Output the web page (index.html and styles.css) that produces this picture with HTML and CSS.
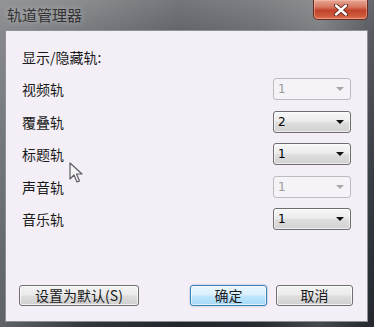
FILE: index.html
```html
<!DOCTYPE html>
<html lang="zh-CN">
<head>
<meta charset="utf-8">
<link rel="stylesheet" href="styles.css">
</head>
<body>
<div class="window">
  <div class="titlebar">
    <span class="title">轨道管理器</span>
    <div class="close">
      <svg width="16" height="12" viewBox="0 0 16 12">
        <path d="M3 1.5 L13 10.5 M13 1.5 L3 10.5" stroke="#5a2418" stroke-width="4.2" stroke-linecap="round" fill="none"/>
        <path d="M3 1.5 L13 10.5 M13 1.5 L3 10.5" stroke="#ffffff" stroke-width="2.4" stroke-linecap="round" fill="none"/>
      </svg>
    </div>
  </div>
  <div class="client">
    <div class="heading">显示/隐藏轨:</div>
    <div class="tracks">
      <div class="row"><span class="label">视频轨</span>
        <div class="combo disabled"><span class="val">1</span><span class="arrow"></span></div></div>
      <div class="row"><span class="label">覆叠轨</span>
        <div class="combo"><span class="val">2</span><span class="arrow"></span></div></div>
      <div class="row"><span class="label">标题轨</span>
        <div class="combo"><span class="val">1</span><span class="arrow"></span></div></div>
      <div class="row"><span class="label">声音轨</span>
        <div class="combo disabled"><span class="val">1</span><span class="arrow"></span></div></div>
      <div class="row"><span class="label">音乐轨</span>
        <div class="combo"><span class="val">1</span><span class="arrow"></span></div></div>
    </div>
    <div class="buttons">
      <button class="btn wide">设置为默认(S)</button>
      <div class="right">
        <button class="btn primary">确定</button>
        <button class="btn">取消</button>
      </div>
    </div>
  </div>
  <svg class="cursor" width="14" height="22" viewBox="0 0 14 22">
    <path d="M1 1 L1 17 L5 13 L8 20 L10.5 19 L7.5 12 L13 12 Z" fill="#f4f4f4" stroke="#5d5f63" stroke-width="1.2" stroke-linejoin="round"/>
  </svg>
</div>
</body>
</html>
```

FILE: styles.css
```css
* { box-sizing: border-box; }
html, body { margin: 0; padding: 0; }
body {
  width: 374px;
  height: 327px;
  overflow: hidden;
  font-family: "Noto Sans CJK SC", "Noto Sans", sans-serif;
}
.window {
  position: relative;
  width: 374px;
  height: 327px;
  display: flex;
  flex-direction: column;
  background:
    linear-gradient(to right, rgba(150,152,155,0.55) 0, rgba(120,122,126,0.2) 90px, rgba(40,44,50,0.25) 180px, rgba(70,74,80,0.2) 260px, rgba(140,142,146,0.35) 320px, rgba(40,44,50,0.4) 374px),
    linear-gradient(to bottom, #8d8f92 0, #77797d 30px, #4c5157 140px, #2b3038 260px, #1f232a 327px);
}
.titlebar {
  height: 30px;
  display: flex;
  align-items: flex-start;
}
.title {
  margin-left: 7px;
  margin-top: 4px;
  font-size: 15px;
  line-height: 22px;
  color: #333333;
  text-shadow: 0 0 6px rgba(230,230,230,0.6);
}
.close {
  margin-left: auto;
  margin-right: 6px;
  width: 55px;
  height: 20px;
  border: 1px solid #6b2a20;
  border-top: none;
  border-radius: 0 0 5px 5px;
  background: linear-gradient(to bottom, #e6a794 0, #d77a63 35%, #c2432a 55%, #cf5a3c 85%, #e07a5a 100%);
  box-shadow: inset 0 0 0 1px rgba(255,200,190,0.45);
  display: flex;
  align-items: center;
  justify-content: center;
}
.client {
  flex: 1;
  margin: 0 6px 5px 5px;
  border: 1px solid #8d9096;
  background: #f4eff6;
  display: flex;
  flex-direction: column;
  padding: 16px 16px 15px 16px;
}
.heading {
  font-size: 14px;
  line-height: 20px;
  color: #1a1a1a;
}
.tracks {
  margin-top: 6px;
}
.row {
  height: 32.5px;
  display: flex;
  align-items: center;
  justify-content: space-between;
}
.label {
  font-size: 14px;
  color: #1a1a1a;
}
.combo {
  width: 78px;
  height: 22px;
  border: 1px solid #6e6e6e;
  border-radius: 3px;
  background: linear-gradient(to bottom, #f7f7f7 0, #ececec 45%, #dcdcdc 55%, #d2d2d2 100%);
  box-shadow: inset 0 0 0 1px rgba(255,255,255,0.6);
  display: flex;
  align-items: center;
  padding: 0 6px 0 4px;
  font-family: "DejaVu Sans", "Liberation Sans", sans-serif;
  font-size: 12px;
  color: #000;
}
.combo .val { flex: 1; }
.combo .arrow {
  width: 0;
  height: 0;
  border-left: 4px solid transparent;
  border-right: 4px solid transparent;
  border-top: 4px solid #111;
}
.combo.disabled {
  border-color: #bcbcc0;
  background: #f6f3f8;
  box-shadow: none;
  color: #9a9a9a;
}
.combo.disabled .arrow { border-top-color: #a8a8ac; }
.buttons {
  margin-top: auto;
  display: flex;
  justify-content: space-between;
  margin-left: -3px;
  margin-right: -2px;
}
.right {
  display: flex;
  gap: 9px;
}
.btn {
  height: 21px;
  width: 77px;
  margin: 0;
  padding: 0;
  border: 1px solid #707070;
  border-radius: 3px;
  background: linear-gradient(to bottom, #f3f3f3 0, #ebebeb 45%, #dddddd 55%, #cfcfcf 100%);
  box-shadow: inset 0 0 0 1px rgba(255,255,255,0.7);
  font-family: "Noto Sans CJK SC", sans-serif;
  font-size: 14px;
  line-height: 19px;
  color: #1a1a1a;
}
.btn.wide { width: 120px; }
.btn.primary {
  border-color: #3c7fb1;
  background: linear-gradient(to bottom, #eaf6fd 0, #d9f0fc 45%, #bee6fd 55%, #a7d9f5 100%);
  box-shadow: inset 0 0 0 1px rgba(255,255,255,0.6), 0 0 2px rgba(60,130,200,0.6);
}
.cursor {
  position: absolute;
  left: 69px;
  top: 162px;
}
```
